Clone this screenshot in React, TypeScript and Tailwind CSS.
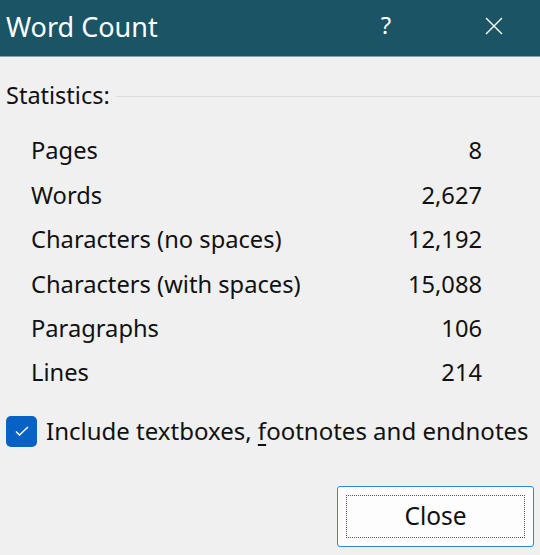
import React from "react";

const rows: [string, string][] = [
  ["Pages", "8"],
  ["Words", "2,627"],
  ["Characters (no spaces)", "12,192"],
  ["Characters (with spaces)", "15,088"],
  ["Paragraphs", "106"],
  ["Lines", "214"],
];

export default function App() {
  return (
    <div
      className="w-[540px] h-[555px] bg-[#f0f0f0] flex flex-col text-[#111] overflow-hidden"
      style={{ fontFamily: '"Noto Sans", "Open Sans", sans-serif' }}
    >
      <div className="h-[57px] bg-[#1b5464] border-b border-[#7fa3ad] flex items-center text-white shrink-0">
        <div className="pl-[6px] text-[27px] leading-none flex-1 pb-[3px]">Word Count</div>
        <div className="w-[40px] text-center text-[24px] leading-none mr-[68px] pb-[6px]">?</div>
        <div className="w-[40px] flex items-center justify-center mr-[26px] pb-[4px]">
          <svg width="20" height="20" viewBox="0 0 20 20" fill="none" stroke="white" strokeWidth="1.4">
            <path d="M2 2 L18 18 M18 2 L2 18" />
          </svg>
        </div>
      </div>

      <div className="flex items-center pl-[6px] pt-[24px]">
        <span className="text-[23.5px] leading-[28px]">Statistics:</span>
        <div className="flex-1 h-px bg-[#dcdcdc] ml-[6px] mt-[2px]" />
      </div>

      <div className="flex flex-col pl-[31px] pr-[58px] pt-[20px]">
        {rows.map(([label, value]) => (
          <div key={label} className="flex justify-between items-center h-[44.4px] text-[23.7px]">
            <span>{label}</span>
            <span>{value}</span>
          </div>
        ))}
      </div>

      <div className="flex items-center pl-[6px] mt-[18px]">
        <div className="w-[31px] h-[31px] rounded-[5px] bg-[#0862c5] flex items-center justify-center">
          <svg width="16" height="16" viewBox="0 0 16 16" fill="none" stroke="white" strokeWidth="1.4">
            <path d="M2 8.5 L5.5 12 L14 4" />
          </svg>
        </div>
        <span className="ml-[9px] text-[24px]">
          Include textboxes, <span className="underline underline-offset-[4px]">f</span>ootnotes and endnotes
        </span>
      </div>

      <div className="flex justify-end pr-[6px] mt-[37px]">
        <div className="w-[197px] h-[61px] rounded-[3px] border border-[#2f86e0] bg-[#fdfdfd] p-[8px]">
          <div className="w-full h-full border border-dotted border-[#555] flex items-center justify-center text-[24.5px]">
            Close
          </div>
        </div>
      </div>
    </div>
  );
}
